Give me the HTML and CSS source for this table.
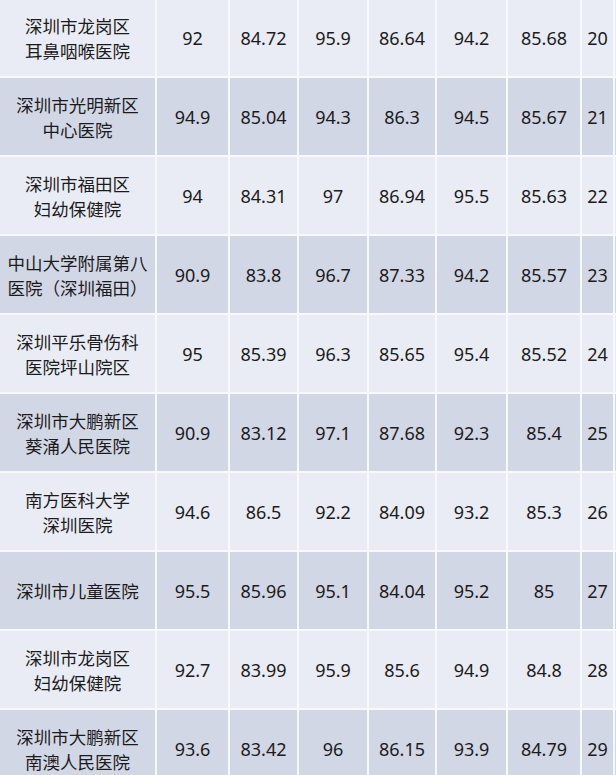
FILE: index.html
```html
<!DOCTYPE html>
<html lang="zh-CN">
<head>
<meta charset="utf-8">
<title>医院评分表</title>
<link rel="stylesheet" href="styles.css">
</head>
<body>
<div class="table">
  <div class="row light"><div class="name">深圳市龙岗区<br>耳鼻咽喉医院</div><div>92</div><div>84.72</div><div>95.9</div><div>86.64</div><div>94.2</div><div>85.68</div><div>20</div><div></div></div>
  <div class="row dark"><div class="name">深圳市光明新区<br>中心医院</div><div>94.9</div><div>85.04</div><div>94.3</div><div>86.3</div><div>94.5</div><div>85.67</div><div>21</div><div></div></div>
  <div class="row light"><div class="name">深圳市福田区<br>妇幼保健院</div><div>94</div><div>84.31</div><div>97</div><div>86.94</div><div>95.5</div><div>85.63</div><div>22</div><div></div></div>
  <div class="row dark"><div class="name">中山大学附属第八<br>医院（深圳福田）</div><div>90.9</div><div>83.8</div><div>96.7</div><div>87.33</div><div>94.2</div><div>85.57</div><div>23</div><div></div></div>
  <div class="row light"><div class="name">深圳平乐骨伤科<br>医院坪山院区</div><div>95</div><div>85.39</div><div>96.3</div><div>85.65</div><div>95.4</div><div>85.52</div><div>24</div><div></div></div>
  <div class="row dark"><div class="name">深圳市大鹏新区<br>葵涌人民医院</div><div>90.9</div><div>83.12</div><div>97.1</div><div>87.68</div><div>92.3</div><div>85.4</div><div>25</div><div></div></div>
  <div class="row light"><div class="name">南方医科大学<br>深圳医院</div><div>94.6</div><div>86.5</div><div>92.2</div><div>84.09</div><div>93.2</div><div>85.3</div><div>26</div><div></div></div>
  <div class="row dark"><div class="name">深圳市儿童医院</div><div>95.5</div><div>85.96</div><div>95.1</div><div>84.04</div><div>95.2</div><div>85</div><div>27</div><div></div></div>
  <div class="row light"><div class="name">深圳市龙岗区<br>妇幼保健院</div><div>92.7</div><div>83.99</div><div>95.9</div><div>85.6</div><div>94.9</div><div>84.8</div><div>28</div><div></div></div>
  <div class="row dark"><div class="name">深圳市大鹏新区<br>南澳人民医院</div><div>93.6</div><div>83.42</div><div>96</div><div>86.15</div><div>93.9</div><div>84.79</div><div>29</div><div></div></div>
</div>
</body>
</html>
```
FILE: styles.css
```css
html, body {
  margin: 0;
  padding: 0;
  background: #f8f9fc;
  overflow: hidden;
}
.table {
  display: flex;
  flex-direction: column;
  gap: 2px;
  margin-top: -1px;
  background: #f8f9fc;
  font-family: "Noto Sans", "Noto Sans CJK SC", sans-serif;
  color: #1b1b1d;
}
.row {
  display: grid;
  grid-template-columns: 155px 71px 67px 68px 66px 69px 72px 31px 1fr;
  column-gap: 2px;
  height: 77px;
  background: #f8f9fc;
}
.row > div {
  display: flex;
  align-items: center;
  justify-content: center;
  text-align: center;
  font-size: 18px;
  white-space: nowrap;
}
.row > .name {
  font-family: "Noto Sans CJK SC", sans-serif;
  font-size: 17.5px;
  line-height: 25px;
}
.light > div {
  background: #e9ecf4;
}
.dark > div {
  background: #d2d7e5;
}
```
